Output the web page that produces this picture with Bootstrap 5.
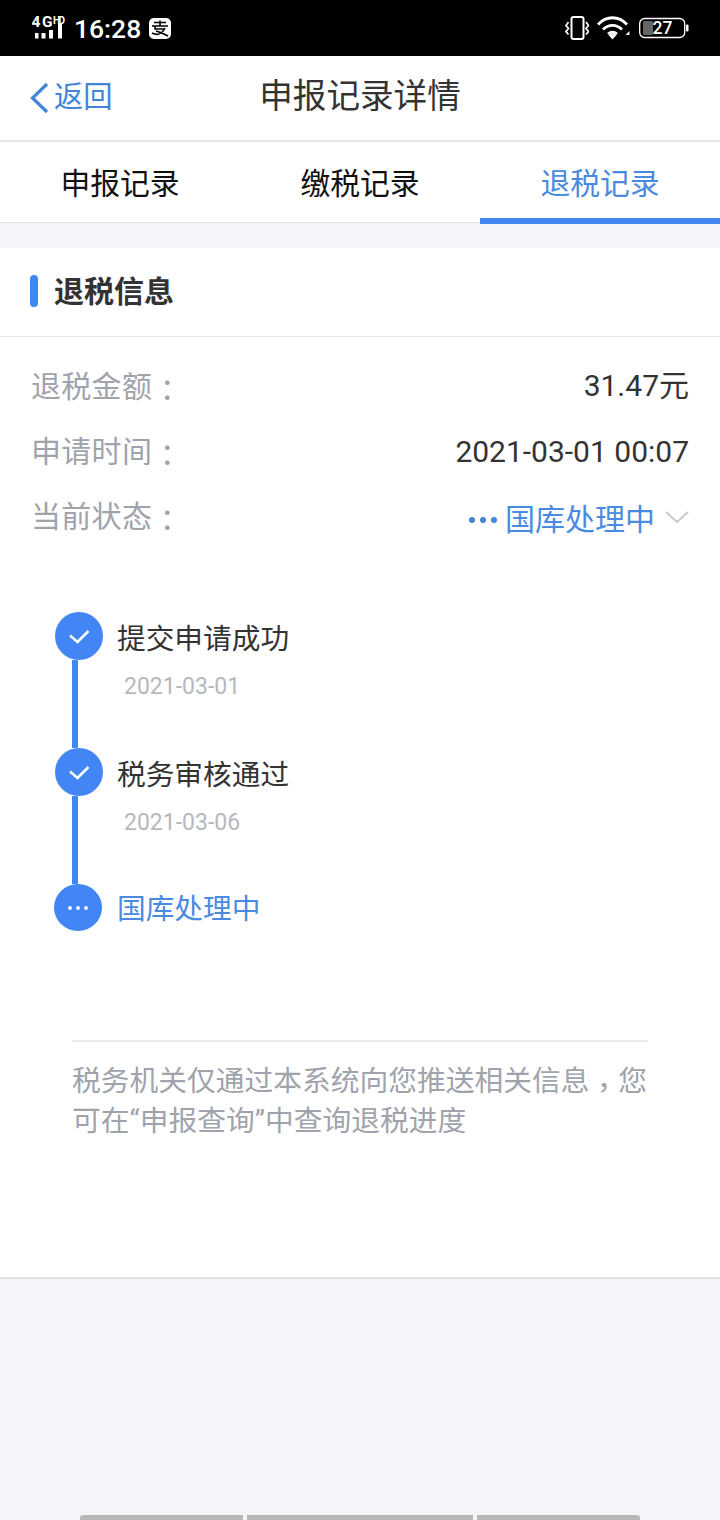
<!DOCTYPE html>
<html lang="zh">
<head>
<meta charset="utf-8">
<title>申报记录详情</title>
<link href="https://cdn.jsdelivr.net/npm/bootstrap@5.3.0/dist/css/bootstrap.min.css" rel="stylesheet">
<style>
html,body{height:1520px;overflow:hidden}
body{background:#f4f5f9;font-family:Roboto,"Noto Sans CJK SC",sans-serif;color:#333;width:720px}
.sbar{height:56px;background:#000;color:#fff;padding:0 31px 0 32px}
.sbar-time{font-size:26.5px;font-weight:500;line-height:1;margin-left:8px;margin-right:8px;padding-top:3px}
.navhead{height:86px;background:#fff;border-bottom:2px solid #e6e6e6;padding-left:30px;position:relative}
.navback{color:#4285d8;font-size:29.3px;line-height:1;gap:5px}
.navname{position:absolute;left:0;right:0;top:20px;text-align:center;font-size:33.6px;line-height:42px;color:#333}
.tabbar{height:81px;background:#fff;border-bottom:1px solid #e3e3e3}
.tabcell{flex:1 1 0;text-align:center;font-size:29.8px;line-height:84px;height:82px;color:#111}
.tabcell.on{color:#4a8ae0;border-bottom:6px solid #4285f4}
.panel{margin-top:25px;height:1031px;background:#fff;border-bottom:2px solid #e4e4e6}
.phead{height:89px;border-bottom:1px solid #e6e6e6;padding:0 0 2px 30px;gap:16px;font-size:30px;font-weight:700;color:#333}
.pmark{width:8px;height:32px;border-radius:4px;background:#4285f4}
.inforow{height:65px;padding:0 31px;font-size:30px;line-height:40px}
.inforow.first{height:66px;margin-top:16px}
.lbl{color:#a0a3ab;letter-spacing:.3px;margin-top:2px}
.tcpunct{font-family:"Noto Sans CJK TC",sans-serif;vertical-align:-4px}
.val{color:#333}
.statusval{color:#4a8ae0;margin-top:6px}
.dots{gap:5px;margin-right:8px}
.dots i{display:block;width:6px;height:6px;border-radius:50%;background:#4285d8}
.statuschev{margin-left:10px;margin-top:-4px}
.tline{padding:63px 0 0 55px}
.tstep{display:flex;gap:14px}
.tnode{width:48px;flex:none;display:flex;flex-direction:column}
.tcircle{width:48px;height:48px;border-radius:50%;background:#4285f4;flex:none}
.tbar{width:6px;flex:1;background:#4285f4;margin-left:17px}
.tbody{font-size:28.7px;line-height:40px;padding-top:7px;color:#333;height:136px}
.tdate{font-size:23px;line-height:30px;color:#b7b8bb;margin-top:13px;margin-left:7px}
.tstep.last .tbody{color:#4a8ae0;height:48px;padding-top:5px}
.tstep.last .tcircle{margin-left:-1px;height:47px}
.tnote{margin:108px 72px 0;border-top:2px solid #e8eaec;padding-top:19px;font-size:28.75px;color:#a0a3ab}
.tnote div{height:40px;line-height:40px;white-space:nowrap}
.tnote .tcpunct{vertical-align:-7px}
.gest{position:absolute;left:80px;bottom:0;width:560px;height:5px;gap:4px}
.gest span{background:#b8b8b8;height:5px;display:block}
.gest span:first-child{border-radius:3px 0 0 0}
.gest span:last-child{border-radius:0 3px 0 0}
.w-a{width:163px}
.w-b{width:226px}
</style>
</head>
<body>
<div class="sbar d-flex align-items-center">
  <svg width="34" height="28" viewBox="32 14 34 28" fill="#fff" class="flex-shrink-0">
    <text x="31.5" y="27" font-family="Roboto" font-weight="700" font-size="15.5" textLength="21">4G</text>
    <text x="53" y="24" font-family="Roboto" font-weight="700" font-size="10" textLength="12">HD</text>
    <rect x="35" y="33" width="3.5" height="5.5"/><rect x="41.5" y="33" width="4" height="5.5"/><rect x="49" y="30" width="4" height="8.5"/><rect x="58" y="23" width="4" height="15.5"/>
  </svg>
  <span class="sbar-time">16:28</span>
  <svg width="22" height="21" viewBox="0 0 22 21"><rect width="22" height="21" rx="5" fill="#fff"/><path d="M5 4.5h12M11 2.5v5M3 8h16M6 8v3h10M3 15c6 3 10 1 13-5M7 13c4 1 8 3 12 5" fill="none" stroke="#000" stroke-width="1.6"/></svg>
  <div class="ms-auto d-flex align-items-center">
    <svg width="24" height="24" viewBox="0 0 24 24" fill="none" stroke="#fff" stroke-width="2"><rect x="6.5" y="1" width="12" height="22" rx="2"/><path d="M3.5 6L1 9.5l2.5 3-2.5 3 2.5 3M21 6l2.5 3.5-2.5 3 2.5 3-2.5 3" stroke-width="1.7"/></svg>
    <svg class="ms-2" width="34" height="24" viewBox="0 0 34 24" fill="none" stroke="#fff" stroke-width="2.8"><path d="M1 8.5c8.500-9 20.500-9 29 0M6 13.500c5.500-5.500 13.500-5.500 19 0M11 18c3-2.500 6-2.500 9 0"/><path d="M11.500 19l4-2 4 2-4 4.500z" fill="#fff" stroke="none"/><path d="M28.500 19l4-4v4z" fill="#fff" stroke="none"/></svg>
    <svg class="ms-2" width="50" height="22" viewBox="0 0 50 22"><rect x=".7" y="1.500" width="45" height="19" rx="5" fill="none" stroke="#fff" stroke-width="1.300"/><rect x="4" y="4" width="10" height="14" rx="1.500" fill="#666"/><rect x="47" y="7.500" width="2.500" height="7" rx="1" fill="#fff"/><text x="13.500" y="17" font-family="Roboto" font-weight="500" font-size="17.500" fill="#fff">27</text></svg>
  </div>
</div>
<div class="navhead d-flex align-items-center">
  <div class="navback d-flex align-items-center">
    <svg width="19" height="32" viewBox="0 0 19 32" fill="none" stroke="#4285d8" stroke-width="3.2"><path d="M17 2L2.500 16 17 30"/></svg>
    <span>返回</span>
  </div>
  <div class="navname">申报记录详情</div>
</div>
<div class="tabbar d-flex">
  <div class="tabcell">申报记录</div>
  <div class="tabcell">缴税记录</div>
  <div class="tabcell on">退税记录</div>
</div>
<div class="panel">
  <div class="phead d-flex align-items-center"><span class="pmark"></span><span>退税信息</span></div>
  <div class="inforow first d-flex justify-content-between align-items-center"><span class="lbl">退税金额<span class="tcpunct" lang="zh-TW">：</span></span><span class="val">31.47元</span></div>
  <div class="inforow d-flex justify-content-between align-items-center"><span class="lbl">申请时间<span class="tcpunct" lang="zh-TW">：</span></span><span class="val">2021-03-01 00:07</span></div>
  <div class="inforow d-flex justify-content-between align-items-center"><span class="lbl">当前状态<span class="tcpunct" lang="zh-TW">：</span></span>
    <span class="statusval d-flex align-items-center">
      <span class="dots d-flex"><i></i><i></i><i></i></span>
      <span>国库处理中</span>
      <svg class="statuschev" width="24" height="13" viewBox="0 0 24 13" fill="none" stroke="#c9c9c9" stroke-width="2"><path d="M1 1l11 10L23 1"/></svg>
    </span>
  </div>
  <div class="tline">
    <div class="tstep">
      <div class="tnode"><div class="tcircle d-flex align-items-center justify-content-center"><svg width="22" height="15" viewBox="0 0 22 15" fill="none" stroke="#fff" stroke-width="2.600"><path d="M2 6.500l7.500 6.500L20.500 2"/></svg></div><div class="tbar"></div></div>
      <div class="tbody">提交申请成功<div class="tdate">2021-03-01</div></div>
    </div>
    <div class="tstep">
      <div class="tnode"><div class="tcircle d-flex align-items-center justify-content-center"><svg width="22" height="15" viewBox="0 0 22 15" fill="none" stroke="#fff" stroke-width="2.600"><path d="M2 6.500l7.500 6.500L20.500 2"/></svg></div><div class="tbar"></div></div>
      <div class="tbody">税务审核通过<div class="tdate">2021-03-06</div></div>
    </div>
    <div class="tstep last">
      <div class="tnode"><div class="tcircle d-flex align-items-center justify-content-center"><svg width="20" height="4" viewBox="0 0 20 4" fill="#fff"><circle cx="2" cy="2" r="1.900"/><circle cx="10" cy="2" r="1.900"/><circle cx="18" cy="2" r="1.900"/></svg></div></div>
      <div class="tbody">国库处理中</div>
    </div>
  </div>
  <div class="tnote"><div>税务机关仅通过本系统向您推送相关信息<span class="tcpunct" lang="zh-TW">，</span>您</div><div>可在“申报查询”中查询退税进度</div></div>
</div>
<div class="gest d-flex"><span class="w-a"></span><span class="w-b"></span><span class="w-a"></span></div>
<script src="https://cdn.jsdelivr.net/npm/bootstrap@5.3.0/dist/js/bootstrap.bundle.min.js"></script>
</body>
</html>
